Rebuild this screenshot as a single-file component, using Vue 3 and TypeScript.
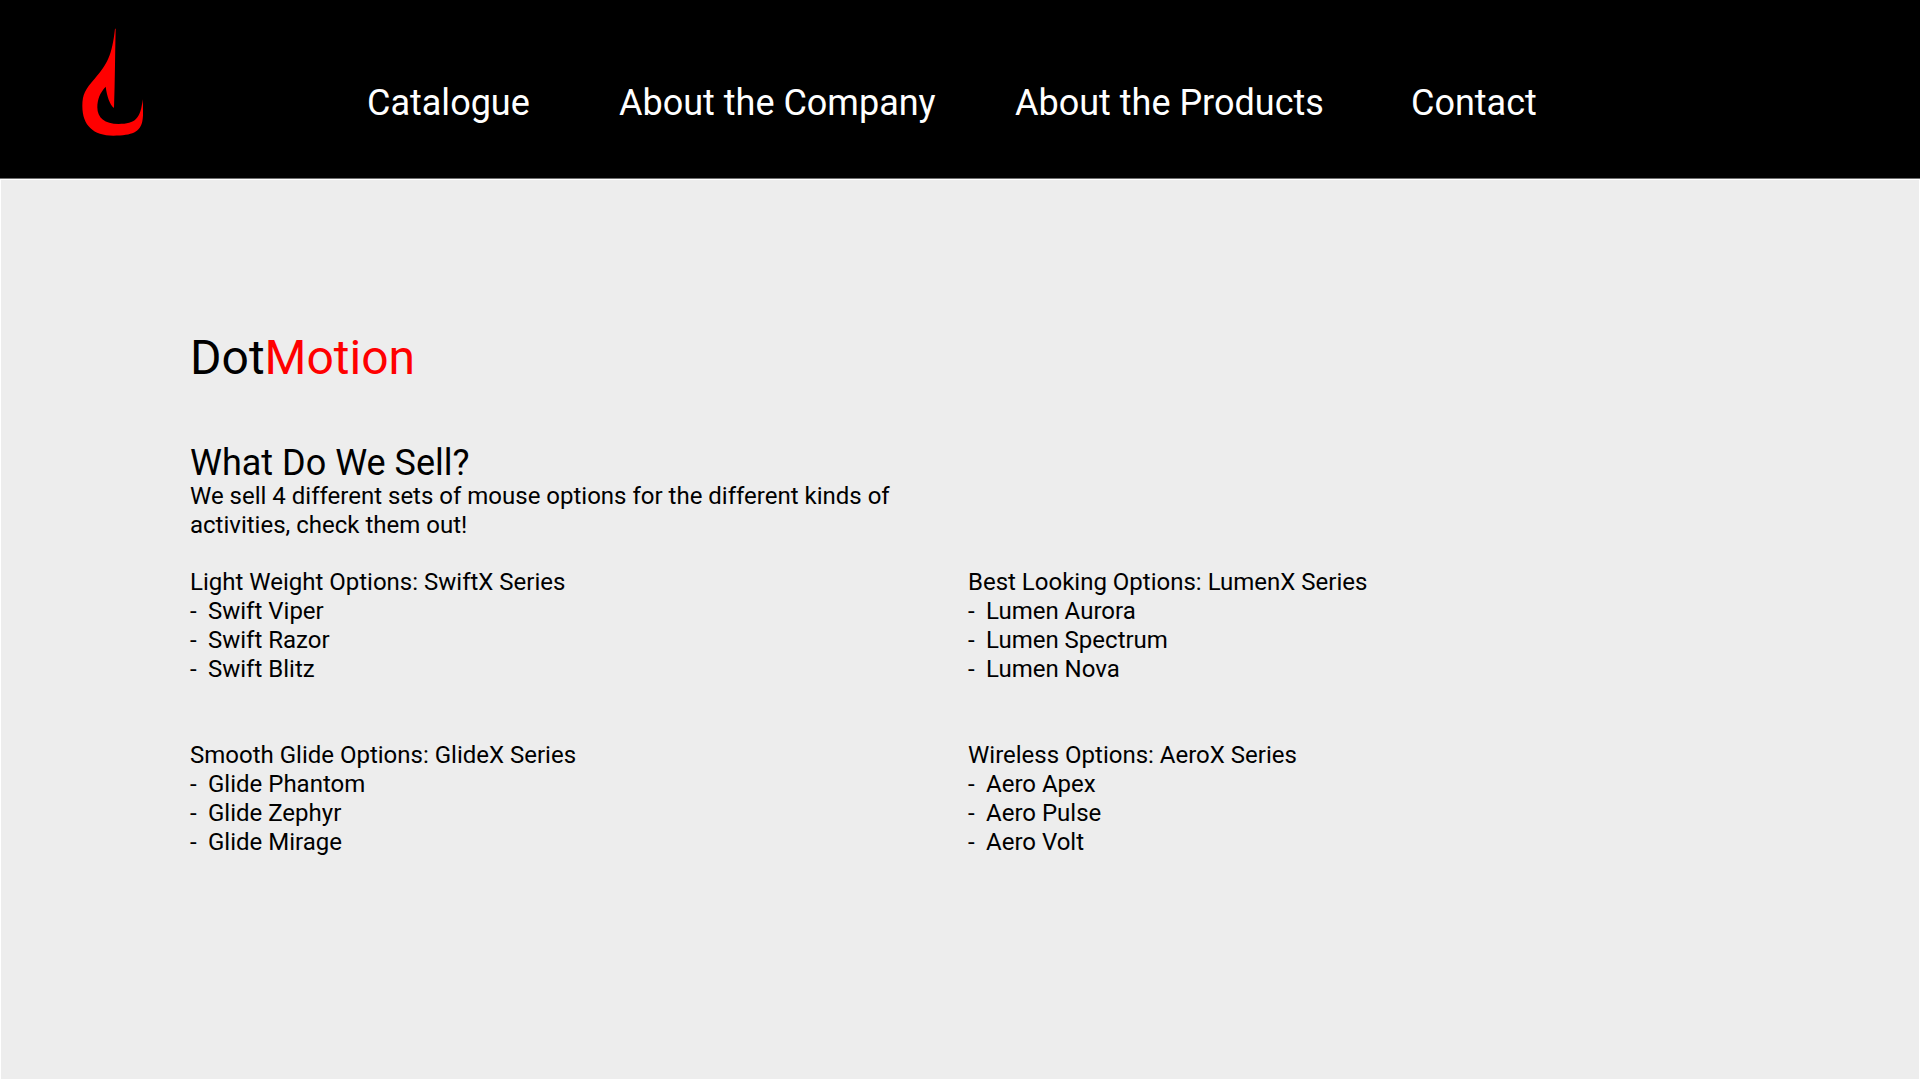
<script setup lang="ts">
interface Series {
  title: string
  products: string[]
}

const links: string[] = ['Catalogue', 'About the Company', 'About the Products', 'Contact']

const series: Series[] = [
  { title: 'Light Weight Options: SwiftX Series', products: ['Swift Viper', 'Swift Razor', 'Swift Blitz'] },
  { title: 'Best Looking Options: LumenX Series', products: ['Lumen Aurora', 'Lumen Spectrum', 'Lumen Nova'] },
  { title: 'Smooth Glide Options: GlideX Series', products: ['Glide Phantom', 'Glide Zephyr', 'Glide Mirage'] },
  { title: 'Wireless Options: AeroX Series', products: ['Aero Apex', 'Aero Pulse', 'Aero Volt'] },
]
</script>

<template>
  <div class="page">
    <header class="header">
      <a class="logo" href="#" aria-label="DotMotion home">
        <svg viewBox="66 54 183 324" aria-hidden="true">
          <path
            d="M165 56 L167 56 C165 134 165 210 162 294 C148 282 141 258 137 230 C120 248 112 268 112 292 C112 324 134 342 176 342 C226 342 242 326 248 268 C250 300 250 316 247 334 C240 366 218 377 160 377 C100 377 67 346 67 288 C67 252 76 238 104 206 C142 162 156 136 165 56 Z"
          />
        </svg>
      </a>
      <nav class="nav">
        <a v-for="link in links" :key="link" href="#">{{ link }}</a>
      </nav>
    </header>

    <main class="content">
      <h1>Dot<span class="accent">Motion</span></h1>
      <h2>What Do We Sell?</h2>
      <p class="intro">
        We sell 4 different sets of mouse options for the different kinds of activities, check them out!
      </p>
      <div class="series-grid">
        <section v-for="item in series" :key="item.title">
          <h3>{{ item.title }}</h3>
          <ul>
            <li v-for="product in item.products" :key="product">
              <span class="dash">-</span>{{ product }}
            </li>
          </ul>
        </section>
      </div>
    </main>
  </div>
</template>

<style>
body {
  margin: 0;
}
</style>

<style scoped>
.page {
  display: flex;
  flex-direction: column;
  min-height: 100vh;
  font-family: Bahnschrift, Roboto, 'Liberation Sans', sans-serif;
  font-size: 24px;
  line-height: 29px;
  color: #000;
}

.header {
  display: flex;
  align-items: flex-start;
  box-sizing: border-box;
  min-height: 179px;
  padding: 28px 82px;
  background: #000;
  border-bottom: 1px solid #707070;
}

.logo {
  flex: none;
  width: 61px;
  margin-right: 224px;
}

.logo svg {
  display: block;
  width: 61px;
  height: 108px;
  fill: #f00;
}

.nav {
  display: grid;
  grid-template-columns: 252px 396px 396px auto;
  padding-top: 53px;
  font-size: 36px;
  line-height: 44px;
}

.nav a {
  color: #fff;
  text-decoration: none;
  white-space: nowrap;
}

.content {
  flex: 1;
  padding: 150px 189px 60px;
  background: #ededed;
  border: 1px solid #fff;
}

h1,
h2,
h3,
p,
ul {
  margin: 0;
  padding: 0;
  font-weight: 400;
}

h1 {
  margin-bottom: 59px;
  font-size: 48px;
  line-height: 56px;
}

.accent {
  color: #f00;
}

h2 {
  margin-bottom: 1px;
  font-size: 36px;
  line-height: 36px;
}

h3 {
  font-size: 24px;
  line-height: 29px;
}

.intro {
  max-width: 740px;
  margin-bottom: 28px;
}

.series-grid {
  display: grid;
  grid-template-columns: repeat(2, 1fr);
  row-gap: 57px;
  column-gap: 16px;
}

ul {
  list-style: none;
}

li {
  display: flex;
}

.dash {
  width: 18px;
}
</style>
